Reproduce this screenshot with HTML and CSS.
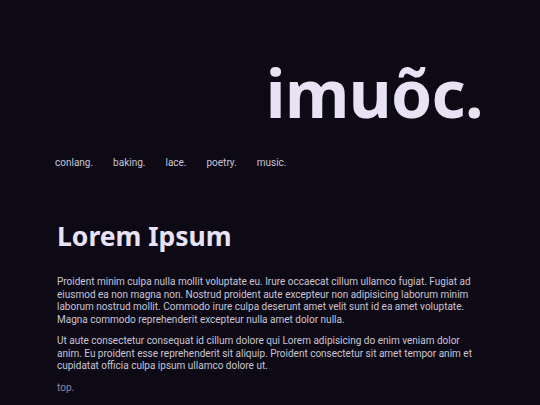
FILE: index.html
```html
<!DOCTYPE html>
<html lang="en">
<head>
<meta charset="utf-8">
<title>imuõc.</title>
<link rel="stylesheet" href="styles.css">
</head>
<body>
<div class="page">
  <header class="masthead">
    <h1 class="logo">imuõc.</h1>
    <nav class="nav">
      <a href="#">conlang.</a>
      <a href="#">baking.</a>
      <a href="#">lace.</a>
      <a href="#">poetry.</a>
      <a href="#">music.</a>
    </nav>
  </header>
  <main class="content">
    <h2 class="title">Lorem Ipsum</h2>
    <p class="para">Proident minim culpa nulla mollit voluptate eu. Irure occaecat cillum ullamco fugiat. Fugiat ad eiusmod ea non magna non. Nostrud proident aute excepteur non adipisicing laborum minim laborum nostrud mollit. Commodo irure culpa deserunt amet velit sunt id ea amet voluptate. Magna commodo reprehenderit excepteur nulla amet dolor nulla.</p>
    <p class="para">Ut aute consectetur consequat id cillum dolore qui Lorem adipisicing do enim veniam dolor anim. Eu proident esse reprehenderit sit aliquip. Proident consectetur sit amet tempor anim et cupidatat officia culpa ipsum ullamco dolore ut.</p>
    <a class="top" href="#">top.</a>
  </main>
</div>
</body>
</html>
```
FILE: styles.css
```css
html, body {
  margin: 0;
  padding: 0;
  background: #0d0a16;
}
body {
  font-family: Roboto, "Noto Sans", sans-serif;
  color: #c9c5d6;
}
.page {
  width: 430px;
  margin: 0 auto;
  padding-top: 52px;
  box-sizing: border-box;
}
.masthead {
  display: flex;
  flex-direction: column;
}
.logo {
  margin: 0;
  font-family: "Noto Sans", sans-serif;
  font-size: 66px;
  font-weight: 700;
  line-height: 80px;
  text-align: right;
  color: #e7e3f5;
  padding-right: 2px;
  letter-spacing: -0.6px;
}
.nav {
  display: flex;
  gap: 20px;
  margin-top: 25px;
}
.nav a {
  font-size: 10px;
  color: #c9c5d6;
  text-decoration: none;
}
.content {
  padding-left: 2px;
  padding-top: 50px;
}
.title {
  margin: 0 0 22px;
  font-family: "Noto Sans", sans-serif;
  font-size: 26.5px;
  font-weight: 700;
  color: #e7e3f5;
  line-height: 36px;
}
.para {
  margin: 0 0 9px;
  font-size: 10px;
  line-height: 12.5px;
}
.top {
  display: block;
  width: fit-content;
  margin-top: 2px;
  font-size: 10px;
  line-height: 12px;
  color: #8d89ab;
  text-decoration: none;
}
```
